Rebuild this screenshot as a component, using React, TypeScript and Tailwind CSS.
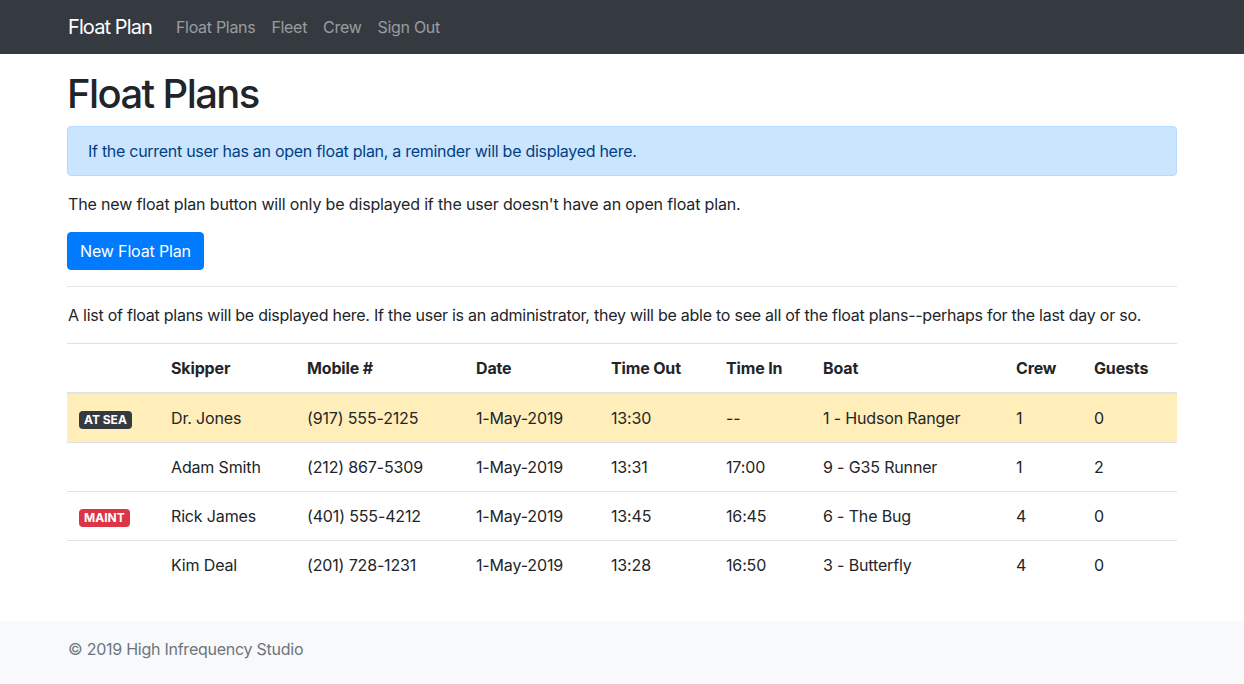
const ROWS = [
  { badge: "AT SEA", skipper: "Dr. Jones", mobile: "(917) 555-2125", date: "1-May-2019", out: "13:30", in: "--", boat: "1 - Hudson Ranger", crew: "1", guests: "0" },
  { badge: "", skipper: "Adam Smith", mobile: "(212) 867-5309", date: "1-May-2019", out: "13:31", in: "17:00", boat: "9 - G35 Runner", crew: "1", guests: "2" },
  { badge: "MAINT", skipper: "Rick James", mobile: "(401) 555-4212", date: "1-May-2019", out: "13:45", in: "16:45", boat: "6 - The Bug", crew: "4", guests: "0" },
  { badge: "", skipper: "Kim Deal", mobile: "(201) 728-1231", date: "1-May-2019", out: "13:28", in: "16:50", boat: "3 - Butterfly", crew: "4", guests: "0" },
];

const HEADS = ["", "Skipper", "Mobile #", "Date", "Time Out", "Time In", "Boat", "Crew", "Guests"];
const WIDTHS = ["w-[92px]", "w-[136px]", "w-[169px]", "w-[135px]", "w-[115px]", "w-[97px]", "w-[193px]", "w-[78px]", "w-[95px]"];

function Badge({ label }: { label: string }) {
  if (!label) return null;
  const bg = label === "MAINT" ? "bg-[#dc3545]" : "bg-[#343a40]";
  return (
    <span className={`inline-block rounded-[4px] px-[5px] py-[3px] align-baseline text-[12px] font-bold leading-none tracking-normal text-white ${bg}`}>
      {label}
    </span>
  );
}

export default function App() {
  return (
    <div className="flex flex-col bg-white font-['Inter','Liberation_Sans',sans-serif] text-[16px] leading-6 tracking-[-0.15px] text-[#212529]">
      <nav className="bg-[#343a40]">
        <div className="mx-auto flex h-[54px] w-[1140px] items-center px-[15px]">
          <span className="mr-4 pl-px text-[20px] leading-[30px] tracking-[-0.9px] text-white">Float Plan</span>
          <div className="flex">
            {["Float Plans", "Fleet", "Crew", "Sign Out"].map((l) => (
              <span key={l} className="px-2 text-[16px] tracking-[-0.3px] text-white/50">
                {l}
              </span>
            ))}
          </div>
        </div>
      </nav>

      <main className="mx-auto w-[1140px] px-[15px] pt-4 pb-4">
        <h1 className="mb-2 text-[40px] font-medium leading-[48px] tracking-[-1.6px]">Float Plans</h1>
        <div className="mb-4 rounded-[4px] border border-[#b8daff] bg-[#cce5ff] px-5 py-3 tracking-[-0.28px] text-[#004085]">
          If the current user has an open float plan, a reminder will be displayed here.
        </div>
        <p className="mb-4 pl-px">The new float plan button will only be displayed if the user doesn't have an open float plan.</p>
        <button className="rounded-[4px] border border-[#007bff] bg-[#007bff] px-3 py-1.5 text-white">New Float Plan</button>
        <hr className="my-4 border-t border-black/10" />
        <p className="mb-4 pl-px tracking-[-0.25px]">
          A list of float plans will be displayed here. If the user is an administrator, they will be able to see all of the float plans--perhaps for the last day or so.
        </p>
        <table className="mb-4 w-full table-fixed border-collapse">
          <thead>
            <tr>
              {HEADS.map((h, i) => (
                <th key={i} className={`${WIDTHS[i]} border-t border-b-2 border-[#dee2e6] p-3 text-left font-bold`}>
                  {h}
                </th>
              ))}
            </tr>
          </thead>
          <tbody>
            {ROWS.map((r, i) => (
              <tr key={i} className={i === 0 ? "bg-[#ffeeba]" : ""}>
                <td className="border-t border-[#dee2e6] p-3">
                  <Badge label={r.badge} />
                </td>
                {[r.skipper, r.mobile, r.date, r.out, r.in, r.boat, r.crew, r.guests].map((v, j) => (
                  <td key={j} className="border-t border-[#dee2e6] p-3">
                    {v}
                  </td>
                ))}
              </tr>
            ))}
          </tbody>
        </table>
      </main>

      <footer className="bg-[#f8f9fa]">
        <div className="mx-auto w-[1140px] px-[15px] pt-4 pb-[23px] pl-[16px] tracking-[-0.25px] text-[#6c757d]">© 2019 High Infrequency Studio</div>
      </footer>
    </div>
  );
}
